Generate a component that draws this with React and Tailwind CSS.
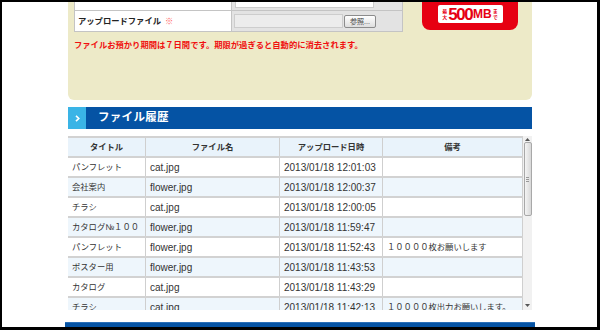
const rows = [
  ["パンフレット", "cat.jpg", "2013/01/18 12:01:03", ""],
  ["会社案内", "flower.jpg", "2013/01/18 12:00:37", ""],
  ["チラシ", "cat.jpg", "2013/01/18 12:00:05", ""],
  ["カタログ№１００", "flower.jpg", "2013/01/18 11:59:47", ""],
  ["パンフレット", "flower.jpg", "2013/01/18 11:52:43", "１００００枚お願いします"],
  ["ポスター用", "flower.jpg", "2013/01/18 11:43:53", ""],
  ["カタログ", "cat.jpg", "2013/01/18 11:43:29", ""],
  ["チラシ", "cat.jpg", "2013/01/18 11:42:13", "１００００枚出力お願いします。"],
];

const font = { fontFamily: '"Liberation Sans", "Noto Sans CJK JP", sans-serif' };

export default function App() {
  return (
    <div
      className="w-[600px] h-[330px] overflow-hidden bg-white border-black border-t-2 border-l-2 border-r-[3px] border-b-[3px] text-[#333]"
      style={font}
    >
      <div className="ml-[66px] w-[464px] flex flex-col">
        {/* upload panel */}
        <div className="mt-[-12px] h-[110px] bg-[#edeac8] rounded-b-[6px] pl-[6px] pr-[14px]">
          <div className="flex items-start">
            <div className="w-[329px] border-l border-r border-[#c4c4c4]">
              <div className="flex h-[21px] border-b border-[#c4c4c4]">
                <div className="w-[157px] bg-white border-r border-[#c4c4c4]" />
                <div className="flex-1 bg-[#e3e3e3] pl-[3px] pt-[3px]">
                  <div className="w-[139px] h-[15px] bg-white border border-[#cccccc]" />
                </div>
              </div>
              <div className="flex h-[21px] border-b border-[#c4c4c4]">
                <div className="w-[157px] bg-white border-r border-[#c4c4c4] flex items-center pl-[3px] text-[8.3px] font-bold text-[#222]">
                  アップロードファイル
                  <span className="ml-[4px] text-[#ff6a6a] font-normal">※</span>
                </div>
                <div className="flex-1 bg-[#e3e3e3] flex items-center pl-[2px]">
                  <div className="w-[109px] h-[14px] bg-[#ececec] border border-[#cdcdcd]" />
                  <div className="ml-[1px] w-[32px] h-[13px] border border-[#8c8c8c] rounded-[2px] bg-gradient-to-b from-white to-[#dedede] text-[7px] leading-none text-[#444] flex items-center justify-center">
                    参照...
                  </div>
                </div>
              </div>
            </div>
            <div className="ml-[19px] w-[96px] h-[40px] bg-[#e60012] rounded-b-[8px] pt-[15px] flex justify-center">
              <div className="w-[65px] h-[18px] bg-white rounded-[2px] flex items-center justify-center text-[#e60012] font-bold">
                <div className="flex flex-col text-[5px] leading-[6px] mr-[1px]">
                  <span>最</span>
                  <span>大</span>
                </div>
                <span className="text-[17px] leading-none tracking-[-1.5px]">500</span>
                <span className="text-[12px] leading-none ml-[1px]">MB</span>
                <div className="flex flex-col text-[5px] leading-[6px] ml-[1px]">
                  <span>ま</span>
                  <span>で</span>
                </div>
              </div>
            </div>
          </div>
          <p className="mt-[7px] text-[8.3px] leading-[12px] font-bold text-[#f01010]">
            ファイルお預かり期間は７日間です。期限が過ぎると自動的に消去されます。
          </p>
        </div>

        {/* section header */}
        <div className="mt-[7px] h-[22px] bg-[#0553a4] flex items-center">
          <div className="w-[18px] h-full bg-[#3ab4e6] flex items-center justify-center">
            <svg width="5" height="7" viewBox="0 0 5 7">
              <polyline points="1,0.8 3.8,3.5 1,6.2" fill="none" stroke="white" strokeWidth="1.6" />
            </svg>
          </div>
          <span className="ml-[12px] text-white font-bold text-[11.5px] tracking-[0.3px]">ファイル履歴</span>
        </div>

        {/* history table */}
        <div className="mt-[7px] h-[174px] flex overflow-hidden">
          <div className="w-[455px]">
            <div className="grid grid-cols-[78px_134px_103px_140px] h-[20px] border-t-2 border-[#d2d2d2] bg-[#e9f3fb] font-bold text-[8.3px] text-[#333]">
              {["タイトル", "ファイル名", "アップロード日時", "備考"].map((h) => (
                <div key={h} className="flex items-center justify-center border-r border-[#cfcfcf]">
                  {h}
                </div>
              ))}
            </div>
            {rows.map((r, i) => (
              <div
                key={i}
                className={`grid grid-cols-[78px_134px_103px_140px] h-[20px] border-t-2 border-[#d2d2d2] ${
                  i % 2 === 1 ? "bg-[#eef6fc]" : "bg-white"
                }`}
              >
                <div className="flex items-center pl-[4px] border-r border-[#cfcfcf] text-[8.3px]">{r[0]}</div>
                <div className="flex items-center pl-[4px] border-r border-[#cfcfcf] text-[10px]">{r[1]}</div>
                <div className="flex items-center pl-[4px] border-r border-[#cfcfcf] text-[10px]">{r[2]}</div>
                <div className="flex items-center pl-[4px] border-r border-[#cfcfcf] text-[8.3px] whitespace-nowrap">{r[3]}</div>
              </div>
            ))}
          </div>
          {/* scrollbar */}
          <div className="w-[9px] h-full bg-[#f1f1f1] flex flex-col items-center">
            <div className="h-[6px] w-full flex items-center justify-center">
              <svg width="5" height="3" viewBox="0 0 5 3">
                <polygon points="2.5,0 5,3 0,3" fill="#555" />
              </svg>
            </div>
            <div className="w-[8px] h-[74px] rounded-[2px] border border-[#a8a8a8] bg-gradient-to-r from-[#f4f4f4] to-[#d8d8d8] flex flex-col items-center justify-center gap-[1px]">
              <div className="w-[3px] h-px bg-[#999]" />
              <div className="w-[3px] h-px bg-[#999]" />
              <div className="w-[3px] h-px bg-[#999]" />
            </div>
            <div className="flex-1" />
            <div className="h-[10px] w-full flex items-center justify-center">
              <svg width="5" height="3" viewBox="0 0 5 3">
                <polygon points="0,0 5,0 2.5,3" fill="#555" />
              </svg>
            </div>
          </div>
        </div>
      </div>

      {/* footer */}
      <div className="ml-[63px] mt-[12px] w-[470px] h-[20px] bg-[#0553a4] border-t border-[#2a6fb8] flex justify-center pt-[2px]">
        <span className="text-[8px] text-[#c8d8ee]">Copyright (C) 2013 All Rights Reserved.</span>
      </div>
    </div>
  );
}
